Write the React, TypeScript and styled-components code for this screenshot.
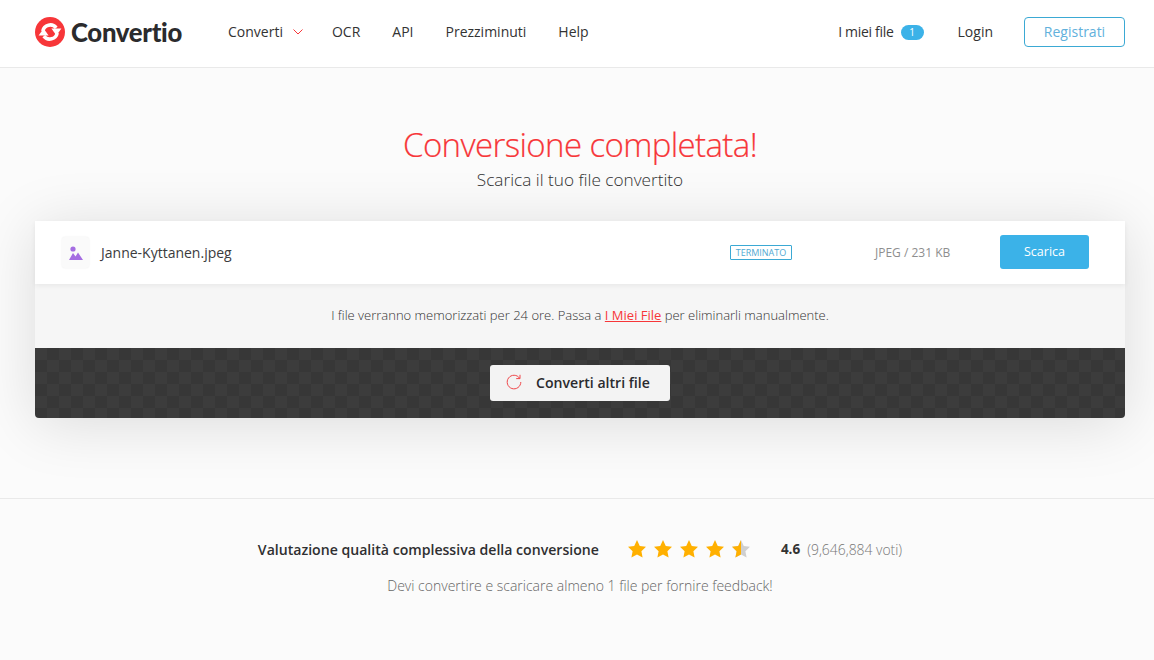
import React from "react";
import styled, { createGlobalStyle } from "styled-components";

const Global = createGlobalStyle`
  html, body { margin: 0; padding: 0; background: #fbfbfb; }
  body { font-family: "Open Sans", "Liberation Sans", sans-serif; color: #2f2f31; }
  * { box-sizing: border-box; }
`;

const Page = styled.div`
  width: 1154px;
  height: 660px;
  overflow: hidden;
  background: #fbfbfb;
`;

const Header = styled.header`
  height: 68px;
  background: #fff;
  border-bottom: 1px solid #e9e9e9;
  display: flex;
  align-items: center;
  padding: 0 29px 3px 35px;
`;

const Logo = styled.div`
  display: flex;
  align-items: center;
  gap: 6px;
  width: 193px;
  font-family: "Lato", sans-serif;
  font-weight: 900;
  font-size: 25.7px;
  letter-spacing: -0.3px;
  color: #2b2b2d;
`;

const Nav = styled.nav`
  display: flex;
  align-items: center;
  gap: 32px;
  padding-bottom: 2px;
`;

const NavItem = styled.a`
  display: flex;
  align-items: center;
  gap: 10px;
  font-size: 14px;
  color: #333;
`;

const Chevron = styled.svg`
  margin: 2px -3px 0 0;
`;

const NavSpacer = styled.div`
  flex: 1;
`;

const HeaderRight = styled.div`
  display: flex;
  align-items: center;
  font-size: 14px;
  color: #333;
`;

const MyFiles = styled.span`
  padding-bottom: 2px;
  letter-spacing: -0.3px;
`;

const LoginLink = styled.a`
  padding-bottom: 2px;
`;

const Badge = styled.span`
  width: 23px;
  height: 15px;
  margin-left: 7px;
  margin-right: 34px;
  border-radius: 8px;
  background: #3bb2e8;
  color: #fff;
  font-size: 10px;
  line-height: 15px;
  text-align: center;
`;

const RegisterButton = styled.a`
  width: 101px;
  height: 30px;
  margin-left: 31px;
  border: 1px solid #3ba9d4;
  border-radius: 4px;
  color: #62b1dc;
  font-size: 14px;
  line-height: 27px;
  text-align: center;
`;

const Hero = styled.section`
  height: 431px;
  border-bottom: 1px solid #e9e9e9;
  padding: 55px 0 0 6px;
  display: flex;
  flex-direction: column;
  align-items: center;
`;

const Title = styled.h1`
  margin: 0;
  height: 44px;
  font-size: 33px;
  line-height: 44px;
  font-weight: 300;
  letter-spacing: -0.62px;
  color: #f73639;
  -webkit-text-stroke: 0.2px #f73639;
`;

const Subtitle = styled.p`
  margin: 0;
  height: 26px;
  font-size: 17.2px;
  line-height: 26px;
  font-weight: 300;
  color: #333;
`;

const Card = styled.div`
  align-self: flex-start;
  margin: 28px 0 0 29px;
  width: 1090px;
  border-radius: 0 0 4px 4px;
  box-shadow: 0 6px 60px rgba(0, 0, 0, 0.13);
`;

const FileRow = styled.div`
  position: relative;
  height: 63px;
  background: #fff;
  display: flex;
  align-items: center;
  padding: 0 36px 0 27px;
  box-shadow: 0 2px 5px rgba(0, 0, 0, 0.06);
`;

const FileIcon = styled.div`
  width: 27px;
  height: 31px;
  border-radius: 3px;
  background: #fafafa;
  box-shadow: 0 0 2px rgba(0, 0, 0, 0.08);
  display: flex;
  align-items: center;
  justify-content: center;
`;

const FileName = styled.span`
  flex: 1;
  margin: -1px 0 0 12px;
  font-size: 14px;
  color: #3b3b3d;
`;

const Status = styled.span`
  width: 62px;
  height: 15px;
  border: 1px solid #3ba9d4;
  border-radius: 1px;
  color: #53a9d2;
  font-size: 9px;
  line-height: 13px;
  text-align: center;
`;

const FileMeta = styled.span`
  width: 76px;
  margin-left: 83px;
  margin-right: 49px;
  font-size: 12px;
  color: #8e8e8e;
  white-space: nowrap;
`;

const DownloadButton = styled.a`
  width: 89px;
  height: 34px;
  margin-top: -2px;
  border-radius: 3px;
  background: #3bb2e8;
  color: #fff;
  font-size: 12.5px;
  line-height: 33px;
  text-align: center;
`;

const Notice = styled.div`
  height: 64px;
  background: #f6f6f6;
  font-size: 13px;
  font-weight: 300;
  color: #333;
  text-align: center;
  line-height: 62px;
`;

const NoticeLink = styled.a`
  color: #f73639;
  font-weight: 400;
  text-decoration: underline;
`;

const Dark = styled.div`
  height: 70px;
  border-radius: 0 0 4px 4px;
  background-color: #373737;
  background-image: conic-gradient(
    #373737 25%,
    #3c3c3c 0 50%,
    #373737 0 75%,
    #3c3c3c 0
  );
  background-size: 24px 24px;
  display: flex;
  align-items: center;
  justify-content: center;
`;

const AgainButton = styled.a`
  width: 180px;
  height: 36px;
  border-radius: 3px;
  background: #f3f3f3;
  display: flex;
  align-items: center;
  padding: 0 0 2px 16px;
  gap: 14px;
  font-size: 14.1px;
  font-weight: 600;
  color: #2a2a2e;
`;

const Rating = styled.section`
  padding: 40px 0 0 6px;
  display: flex;
  flex-direction: column;
  align-items: center;
`;

const RatingRow = styled.div`
  display: flex;
  align-items: center;
  height: 20px;
  font-size: 14px;
`;

const RatingLabel = styled.strong`
  font-weight: 600;
  font-size: 14.1px;
  color: #2f2f31;
`;

const Stars = styled.div`
  display: flex;
  gap: 6px;
  margin: 0 30px 0 28px;
`;

const Score = styled.strong`
  font-weight: 700;
  font-size: 13.5px;
  color: #333;
`;

const Votes = styled.span`
  margin-left: 7px;
  font-weight: 300;
  font-size: 13.9px;
  color: #777;
`;

const Hint = styled.p`
  margin: 17px 0 0;
  font-size: 14px;
  line-height: 19px;
  font-weight: 300;
  color: #666;
`;

const STAR = "M10 1l2.78 5.93 6.22.8-4.6 4.4 1.2 6.47L10 15.4l-5.6 3.2 1.2-6.47L1 7.73l6.22-.8z";

const Star: React.FC<{ half?: boolean }> = ({ half }) => (
  <svg width="20" height="20" viewBox="0 0 20 20">
    {half ? (
      <>
        <defs>
          <clipPath id="left-half">
            <rect x="0" y="0" width="10" height="20" />
          </clipPath>
        </defs>
        <path d={STAR} fill="#cfcfcf" />
        <path d={STAR} fill="#ffb000" clipPath="url(#left-half)" />
      </>
    ) : (
      <path d={STAR} fill="#ffb000" />
    )}
  </svg>
);

export default function App() {
  return (
    <Page>
      <Global />
      <Header>
        <Logo>
          <svg width="30" height="30" viewBox="0 0 30 30">
            <circle cx="15" cy="15" r="15" fill="#f73639" />
            <path d="M7.8 14A7.6 7.6 0 0 1 21.2 10.8" fill="none" stroke="#fff" strokeWidth="3.6" />
            <path d="M16.4 11.6h10l-5 7z" fill="#fff" />
            <g transform="rotate(180 15 15)">
              <path d="M7.8 14A7.6 7.6 0 0 1 21.2 10.8" fill="none" stroke="#fff" strokeWidth="3.6" />
              <path d="M16.4 11.6h10l-5 7z" fill="#fff" />
            </g>
          </svg>
          Convertio
        </Logo>
        <Nav>
          <NavItem>
            Converti
            <Chevron width="10" height="6" viewBox="0 0 10 6" fill="none">
              <path d="M.5.5 5 5 9.5.5" stroke="#f73639" strokeWidth="1" />
            </Chevron>
          </NavItem>
          <NavItem>OCR</NavItem>
          <NavItem>API</NavItem>
          <NavItem>Prezziminuti</NavItem>
          <NavItem>Help</NavItem>
        </Nav>
        <NavSpacer />
        <HeaderRight>
          <MyFiles>I miei file</MyFiles>
          <Badge>1</Badge>
          <LoginLink>Login</LoginLink>
          <RegisterButton>Registrati</RegisterButton>
        </HeaderRight>
      </Header>
      <Hero>
        <Title>Conversione completata!</Title>
        <Subtitle>Scarica il tuo file convertito</Subtitle>
        <Card>
          <FileRow>
            <FileIcon>
              <svg width="16" height="16" viewBox="0 0 16 16">
                <circle cx="5" cy="4" r="2.6" fill="#a56de2" />
                <path d="M1 15 5 8l2.5 3.5L10 7.5 15 15z" fill="#a56de2" />
              </svg>
            </FileIcon>
            <FileName>Janne-Kyttanen.jpeg</FileName>
            <Status>TERMINATO</Status>
            <FileMeta>JPEG / 231 KB</FileMeta>
            <DownloadButton>Scarica</DownloadButton>
          </FileRow>
          <Notice>
            I file verranno memorizzati per 24 ore. Passa a <NoticeLink>I Miei File</NoticeLink> per eliminarli manualmente.
          </Notice>
          <Dark>
            <AgainButton>
              <svg width="16" height="16" viewBox="0 0 16 16" fill="none">
                <path d="M13.6 4.2A6.8 6.8 0 1 0 14.8 8" stroke="#f0474a" strokeWidth="1" />
                <path d="M14 .8v3.8h-3.8" stroke="#f0474a" strokeWidth="1" />
              </svg>
              Converti altri file
            </AgainButton>
          </Dark>
        </Card>
      </Hero>
      <Rating>
        <RatingRow>
          <RatingLabel>Valutazione qualità complessiva della conversione</RatingLabel>
          <Stars>
            <Star />
            <Star />
            <Star />
            <Star />
            <Star half />
          </Stars>
          <Score>4.6</Score>
          <Votes>(9,646,884 voti)</Votes>
        </RatingRow>
        <Hint>Devi convertire e scaricare almeno 1 file per fornire feedback!</Hint>
      </Rating>
    </Page>
  );
}
